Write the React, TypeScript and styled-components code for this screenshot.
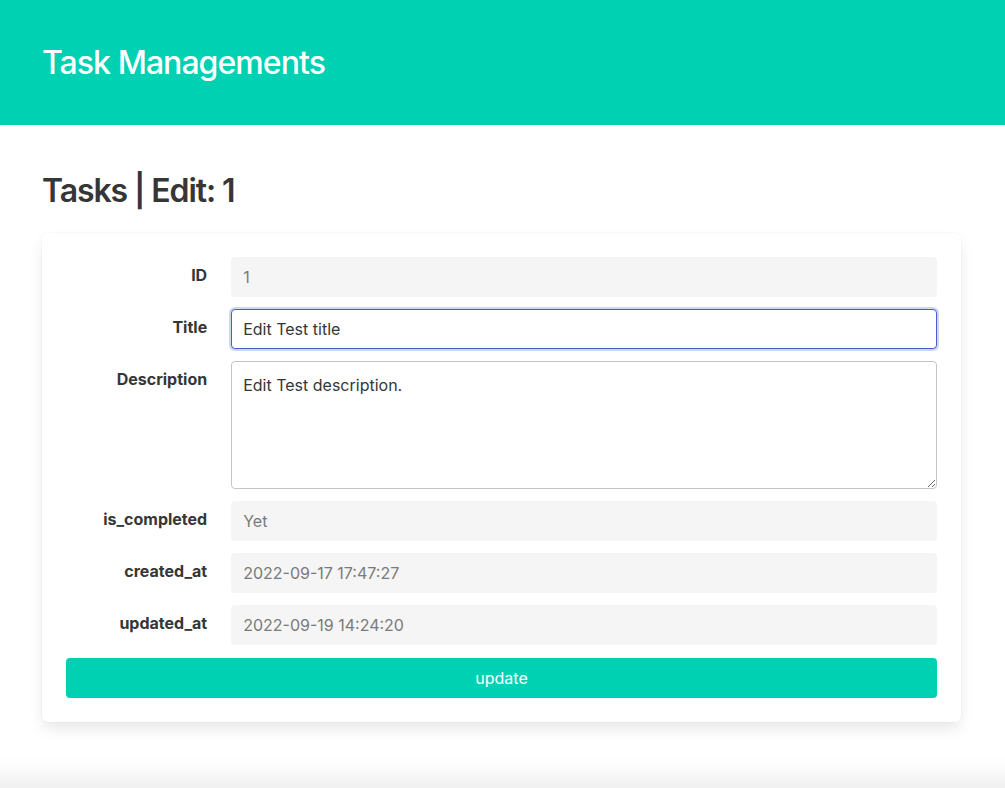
import React from "react";
import styled, { createGlobalStyle } from "styled-components";

const Global = createGlobalStyle`
  html, body { margin: 0; padding: 0; background: #fff; }
  body {
    font-family: Inter, "Noto Sans", "Liberation Sans", sans-serif;
    font-size: 16px;
    color: #4a4a4a;
    -webkit-font-smoothing: antialiased;
  }
  * { box-sizing: border-box; }
`;

const Header = styled.header`
  background: #00d1b2;
  height: 125px;
  display: flex;
  align-items: center;
  padding: 0 42px;
`;

const Brand = styled.h1`
  margin: 0;
  color: #fff;
  font-size: 32px;
  font-weight: 500;
  line-height: 1.125;
  letter-spacing: -0.95px;
`;

const Section = styled.main`
  padding: 48px 44px 33px 42px;
`;

const PageTitle = styled.h2`
  margin: 0 0 24px 0;
  color: #363636;
  font-size: 32px;
  font-weight: 600;
  line-height: 1.125;
  letter-spacing: -1.1px;
`;

const Box = styled.form`
  background: #fff;
  border-radius: 6px;
  padding: 24px;
  box-shadow: 0 0.5em 1em -0.125em rgba(10, 10, 10, 0.1), 0 0 0 1px rgba(10, 10, 10, 0.02);
  display: flex;
  flex-direction: column;
  gap: 12px;
`;

const Field = styled.div`
  display: flex;
  align-items: flex-start;
`;

const Label = styled.label`
  flex: 1 1 0;
  margin-right: 24px;
  text-align: right;
  padding-top: 6px;
  font-weight: 700;
  color: #363636;
  line-height: 1.5;
`;

const Body = styled.div`
  flex: 5 1 0;
  display: flex;
`;

const Input = styled.input<{ $focused?: boolean }>`
  width: 100%;
  height: 40px;
  border-radius: 4px;
  font: inherit;
  font-size: 16px;
  line-height: 1.5;
  padding: 0 11px;
  border: 1px solid ${(p) => (p.$focused ? "#485fc7" : "#f5f5f5")};
  background: ${(p) => (p.$focused ? "#fff" : "#f5f5f5")};
  color: ${(p) => (p.$focused ? "#363636" : "#7a7a7a")};
  box-shadow: ${(p) => (p.$focused ? "0 0 0 0.125em rgba(72,95,199,0.25)" : "none")};
  outline: none;
`;

const TextArea = styled.textarea`
  width: 100%;
  height: 128px;
  border-radius: 4px;
  font: inherit;
  font-size: 16px;
  line-height: 1.5;
  padding: 11px;
  border: 1px solid #c4c4c4;
  background: #fff;
  color: #363636;
  outline: none;
  resize: vertical;
  display: block;
`;

const Button = styled.button`
  height: 40px;
  border: none;
  border-radius: 4px;
  background: #00d1b2;
  color: #fff;
  font: inherit;
  font-size: 16px;
  cursor: pointer;
  margin-top: 1px;
`;

const Footer = styled.footer`
  height: 48px;
  background: linear-gradient(to bottom, #ffffff 0%, #fbfbfb 30%, #efefef 70%, #e6e6e6 100%);
`;

const rows: { label: string; value: string }[] = [
  { label: "is_completed", value: "Yet" },
  { label: "created_at", value: "2022-09-17 17:47:27" },
  { label: "updated_at", value: "2022-09-19 14:24:20" },
];

export default function App() {
  return (
    <>
      <Global />
      <Header>
        <Brand>Task Managements</Brand>
      </Header>
      <Section>
        <PageTitle>Tasks | Edit: 1</PageTitle>
        <Box onSubmit={(e) => e.preventDefault()}>
          <Field>
            <Label>ID</Label>
            <Body>
              <Input readOnly value="1" />
            </Body>
          </Field>
          <Field>
            <Label>Title</Label>
            <Body>
              <Input $focused defaultValue="Edit Test title" />
            </Body>
          </Field>
          <Field>
            <Label>Description</Label>
            <Body>
              <TextArea defaultValue="Edit Test description." />
            </Body>
          </Field>
          {rows.map((r) => (
            <Field key={r.label}>
              <Label>{r.label}</Label>
              <Body>
                <Input readOnly value={r.value} />
              </Body>
            </Field>
          ))}
          <Button type="submit">update</Button>
        </Box>
      </Section>
      <Footer />
    </>
  );
}
